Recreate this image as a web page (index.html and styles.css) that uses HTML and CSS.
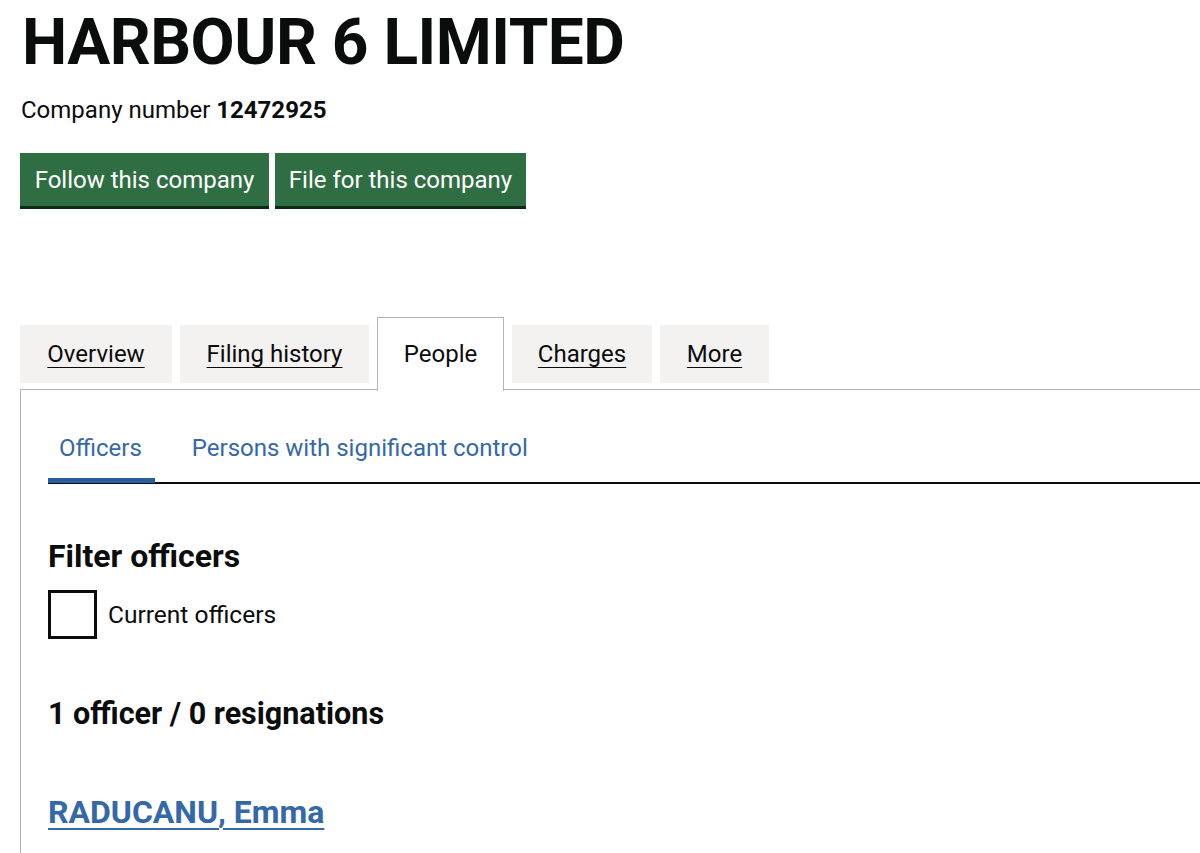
FILE: index.html
```html
<!DOCTYPE html>
<html lang="en">
<head>
<meta charset="utf-8">
<title>HARBOUR 6 LIMITED - People</title>
<link rel="stylesheet" href="styles.css">
</head>
<body>
<main class="page">
  <h1 class="title">HARBOUR 6 LIMITED</h1>
  <p class="company-number">Company number <strong>12472925</strong></p>
  <div class="actions">
    <a class="button" href="#">Follow this company</a>
    <a class="button" href="#">File for this company</a>
  </div>
  <nav class="tabs">
    <a class="tab" href="#">Overview</a>
    <a class="tab" href="#">Filing history</a>
    <span class="tab tab-selected">People</span>
    <a class="tab" href="#">Charges</a>
    <a class="tab" href="#">More</a>
  </nav>
  <section class="panel">
    <div class="subtabs">
      <a class="subtab subtab-active" href="#">Officers</a>
      <a class="subtab" href="#">Persons with significant control</a>
    </div>
    <h2 class="heading filter">Filter officers</h2>
    <label class="checkbox">
      <span class="checkbox-box"></span>
      <span class="checkbox-label">Current officers</span>
    </label>
    <h2 class="heading count">1 officer / 0 resignations</h2>
    <a class="officer" href="#">RADUCANU, Emma</a>
  </section>
</main>
</body>
</html>
```

FILE: styles.css
```css
html, body {
  margin: 0;
  padding: 0;
  background: #ffffff;
}

body {
  font-family: Roboto, "Liberation Sans", Arial, sans-serif;
  color: #0b0c0c;
  overflow: hidden;
  height: 853px;
}

.page {
  padding: 0 0 0 20px;
}

.title {
  margin: 0;
  padding: 7px 0 0 2px;
  font-size: 64px;
  line-height: 72px;
  font-weight: 700;
  letter-spacing: -0.5px;
}

.company-number {
  margin: 17px 0 0 1px;
  font-size: 24px;
  line-height: 28px;
  font-weight: 400;
}

.company-number strong {
  font-weight: 700;
}

.actions {
  display: flex;
  gap: 6px;
  margin-top: 29px;
}

.button {
  display: block;
  background: #2f6e43;
  color: #ffffff;
  text-decoration: none;
  font-size: 24px;
  line-height: 28px;
  padding: 13px 0 12px;
  box-shadow: 0 3px 0 #0e2a16;
  width: 249px;
  text-align: center;
}

.button:last-child {
  width: 251px;
}

.tabs {
  display: flex;
  align-items: flex-end;
  margin-top: 111px;
  gap: 8px;
  position: relative;
  z-index: 1;
}

.tab {
  display: block;
  background: #f3f2f1;
  color: #0b0c0c;
  font-size: 24px;
  line-height: 28px;
  padding: 15px 0;
  text-align: center;
  margin-bottom: 7px;
  text-decoration: underline;
  text-underline-offset: 5px;
  text-decoration-thickness: 1px;
}

.tab:nth-child(1) { width: 152px; }
.tab:nth-child(2) { width: 189px; }
.tab:nth-child(4) { width: 140px; }
.tab:nth-child(5) { width: 109px; }

.tab-selected {
  background: #ffffff;
  text-decoration: none;
  width: 125px;
  border: 1px solid #b1b4b6;
  border-bottom: 0;
  padding: 22px 0 23px;
  margin-bottom: -1px;
}

.panel {
  border: 1px solid #b1b4b6;
  border-right: 0;
  border-bottom: 0;
  margin-top: -1px;
  padding: 44px 0 0 27px;
  height: 420px;
}

.subtabs {
  display: flex;
  border-bottom: 2px solid #0b0c0c;
}

.subtab {
  display: block;
  color: #3468a9;
  text-decoration: none;
  font-size: 24px;
  line-height: 28px;
  padding: 0 0 20px;
  margin-right: 37px;
}

.subtab-active {
  padding: 0 13px 15px 11px;
  border-bottom: 5px solid #2a5e9f;
  margin-bottom: -1px;
}

.heading {
  margin: 0;
  font-weight: 700;
  line-height: 36px;
}

.filter {
  margin-top: 54px;
  font-size: 32px;
}

.checkbox {
  display: flex;
  align-items: center;
  gap: 11px;
  margin-top: 16px;
}

.checkbox-box {
  display: block;
  width: 43px;
  height: 43px;
  border: 3px solid #0b0c0c;
}

.checkbox-label {
  font-size: 24.5px;
  line-height: 28px;
}

.count {
  margin-top: 57px;
  font-size: 30.5px;
}

.officer {
  display: inline-block;
  margin-top: 61px;
  color: #3468a9;
  font-size: 32px;
  line-height: 38px;
  font-weight: 700;
  text-decoration: underline;
  text-underline-offset: 5px;
  text-decoration-thickness: 2px;
}
```
